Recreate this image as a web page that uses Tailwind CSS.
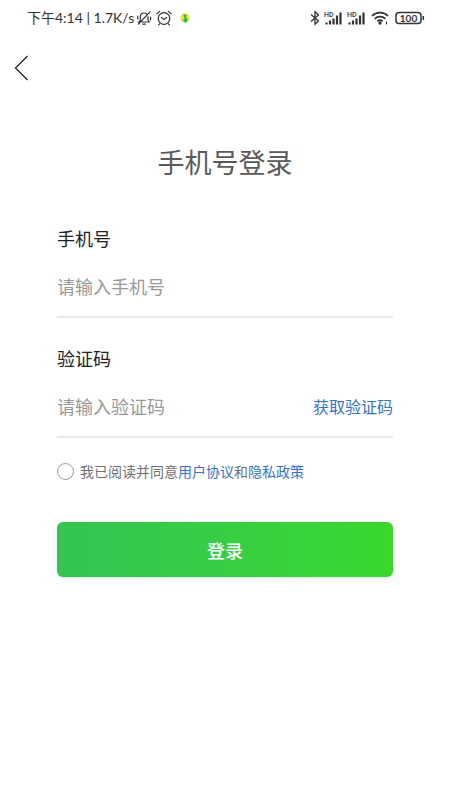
<!DOCTYPE html>
<html lang="zh-CN">
<head>
<meta charset="utf-8">
<meta name="viewport" content="width=device-width, initial-scale=1">
<title>手机号登录</title>
<script src="https://cdn.jsdelivr.net/npm/@tailwindcss/browser@4"></script>
</head>
<body class="min-h-screen bg-white font-['Noto_Sans_CJK_SC',sans-serif] text-[#222]">
  <div class="flex h-9 items-center justify-between pl-[27px] pr-[25px] text-[#333]">
    <div class="flex items-center">
      <span class="whitespace-nowrap text-sm leading-5 font-[Lato,'Noto_Sans_CJK_SC',sans-serif]">下午4:14 | 1.7K/s</span>
      <svg class="ml-[2px] size-4" viewBox="0 0 16 16" fill="none" stroke="currentColor" stroke-width="1.2" stroke-linecap="round" stroke-linejoin="round" aria-hidden="true">
        <path d="M2 12h1.300L4.300 10V7C4.300 4.600 5.800 3 8 3c1 0 1.900.3 2.600.8M12 6.500V10l1.300 2H6M6.800 14.200h2.600M1.700 6v3M14.600 7v3M2.500 14 14 1.800"/>
      </svg>
      <svg class="ml-[3px] size-[18px]" viewBox="0 0 18 18" fill="none" stroke="currentColor" stroke-width="1.2" stroke-linecap="round" aria-hidden="true">
        <circle cx="9" cy="9.500" r="5.800"/><path d="M6.500 8.500 9 10.600l2.700-2M2 4.800l2.700-2.400M16 4.800l-2.700-2.400M4.600 14.800l-1 1M13.400 14.800l1 1"/>
      </svg>
      <svg class="ml-[7px] size-[10px]" viewBox="0 0 11 11" aria-hidden="true">
        <circle cx="5.500" cy="5.500" r="5.200" fill="#f5e13a"/><path d="M3.500 1.500 7.500 2.500 6.600 4l1.600 3a2.300 2.300 0 0 1-4.600 1.600C3.200 7 4.300 6 5.600 6L4.300 4Z" fill="#16b765"/>
      </svg>
    </div>
    <div class="flex items-center">
      <svg class="h-4 w-[10px]" viewBox="0 0 10 16" fill="none" stroke="currentColor" stroke-width="1.300" aria-hidden="true">
        <path d="m1 4.500 7.500 6.500L5 14.200V1.800L8.500 5 1 11.500"/>
      </svg>
      <svg class="ml-[4px] h-[15px] w-[19px]" viewBox="0 0 19 15" aria-hidden="true">
        <text x="0" y="6" font-family="Roboto, sans-serif" font-size="7" font-weight="500" fill="currentColor">HD</text>
        <path d="M2.500 13.500v-2M6 13.500V9.500M9.500 13.500V7.500M13 13.500V4.500M16.500 13.500V1.500" fill="none" stroke="currentColor" stroke-width="2.200"/>
      </svg>
      <svg class="ml-[4px] h-[15px] w-[19px]" viewBox="0 0 19 15" aria-hidden="true">
        <text x="0" y="6" font-family="Roboto, sans-serif" font-size="7" font-weight="500" fill="currentColor">HD</text>
        <path d="M2.500 13.500v-2M6 13.500V9.500M9.500 13.500V7.500M13 13.500V4.500M16.500 13.500V1.500" fill="none" stroke="currentColor" stroke-width="2.200"/>
      </svg>
      <svg class="ml-[5px] h-[14px] w-[18px]" viewBox="0 0 18 14" fill="none" stroke="currentColor" stroke-width="1.700" aria-hidden="true">
        <path d="M1 5a11.300 11.300 0 0 1 16 0M3.700 7.800a7.500 7.500 0 0 1 10.600 0M6.300 10.300a3.800 3.800 0 0 1 5.400 0"/><circle cx="9" cy="12" r=".8" fill="currentColor"/><path d="M15.500 10.500v3" stroke-width="1"/>
      </svg>
      <svg class="ml-[6px] h-[14px] w-[30px]" viewBox="0 0 30 14" aria-hidden="true">
        <rect x="1" y="1.500" width="25" height="11" rx="3" fill="none" stroke="currentColor" stroke-width="1.500"/><path d="M28.300 5v4" stroke="currentColor" stroke-width="1.500"/>
        <text x="13.500" y="10.500" text-anchor="middle" font-family="Lato, sans-serif" font-size="10" font-weight="700" fill="currentColor">100</text>
      </svg>
    </div>
  </div>

  <header class="flex h-16 items-center">
    <button type="button" aria-label="返回" class="flex h-12 items-center pl-[14px] pr-4">
      <svg class="h-[26px] w-[15px]" viewBox="0 0 15 26" fill="none" stroke="#222" stroke-width="1.300" aria-hidden="true"><path d="M13.500 1 1.500 13l12 12"/></svg>
    </button>
  </header>

  <main class="px-[57px] pt-[42px]">
    <h1 class="text-center text-[27px] leading-10 text-[#5a5a5a]">手机号登录</h1>
    <form class="mt-[42px]">
      <div>
        <label for="phone" class="block text-lg leading-7">手机号</label>
        <div class="mt-1 flex h-[62px] items-center border-b-2 border-[#e9e9e9]">
          <input id="phone" type="tel" placeholder="请输入手机号" class="h-full min-w-0 flex-1 text-lg outline-none placeholder:text-[#999]">
        </div>
      </div>
      <div class="mt-[26px]">
        <label for="code" class="block text-lg leading-7">验证码</label>
        <div class="mt-1 flex h-[62px] items-center border-b-2 border-[#e9e9e9]">
          <input id="code" type="text" inputmode="numeric" placeholder="请输入验证码" class="h-full min-w-0 flex-1 text-lg outline-none placeholder:text-[#999]">
          <button type="button" class="shrink-0 text-base text-[#3472d2]">获取验证码</button>
        </div>
      </div>
      <div class="mt-[21px] flex h-6 items-center gap-[6px] whitespace-nowrap text-sm text-[#707070]">
        <input id="agree" type="checkbox" class="size-[17px] shrink-0 appearance-none rounded-full border border-[#999] checked:bg-[#36cb45]">
        <label for="agree">我已阅读并同意<a href="#terms" class="text-[#3472d2]">用户协议</a>和<a href="#privacy" class="text-[#3472d2]">隐私政策</a></label>
      </div>
      <button type="submit" class="mt-[39px] h-[55px] w-full rounded-md bg-linear-to-r from-[#34c453] to-[#3ad82c] text-lg font-medium text-white shadow-sm">登录</button>
    </form>
  </main>
</body>
</html>
